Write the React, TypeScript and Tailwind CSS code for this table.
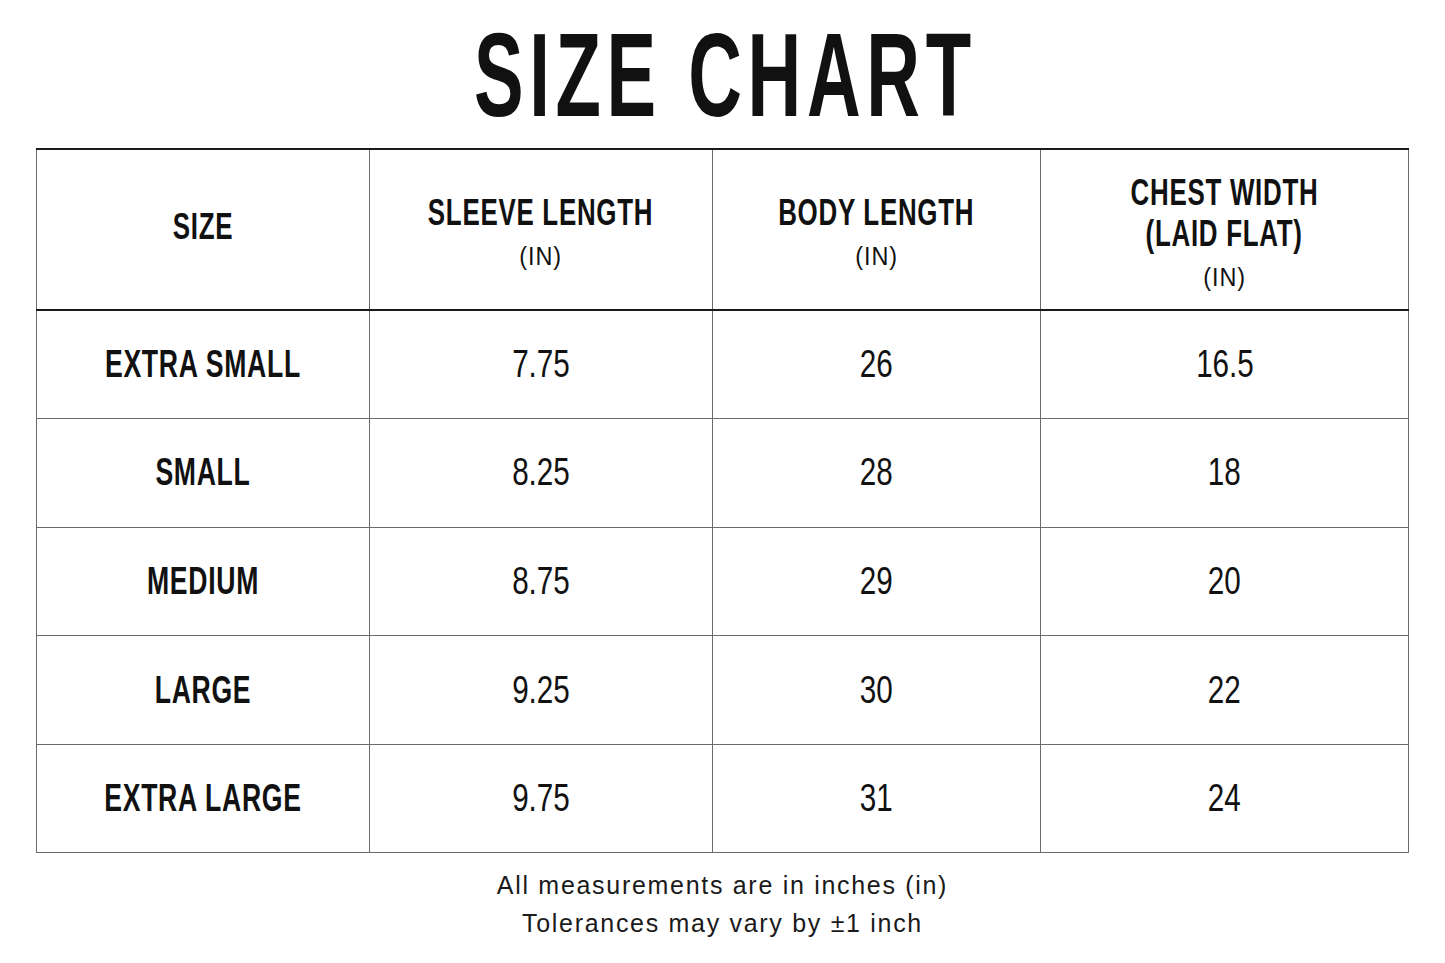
const columns = [
  { w: "w-[333px]", title: ["SIZE"], unit: false },
  { w: "w-[343px]", title: ["SLEEVE LENGTH"], unit: true },
  { w: "w-[328px]", title: ["BODY LENGTH"], unit: true },
  { w: "w-[368px]", title: ["CHEST WIDTH", "(LAID FLAT)"], unit: true },
];

const rows = [
  ["EXTRA SMALL", "7.75", "26", "16.5"],
  ["SMALL", "8.25", "28", "18"],
  ["MEDIUM", "8.75", "29", "20"],
  ["LARGE", "9.25", "30", "22"],
  ["EXTRA LARGE", "9.75", "31", "24"],
];

const display = "font-['Liberation_Sans',Arial,sans-serif]";

export default function App() {
  return (
    <div className="w-[1445px] h-[963px] bg-white text-[#111] flex flex-col items-center">
      <h1
        className={`${display} mt-[16px] text-[118px] leading-none font-bold tracking-[9px] pl-[9px] scale-x-[0.63]`}
      >
        SIZE CHART
      </h1>

      <table className="mt-[14px] border-collapse border-t-2 border-t-[#1a1a1a] table-fixed">
        <thead>
          <tr className="h-[161px] border-b-2 border-b-[#1a1a1a]">
            {columns.map((c, i) => (
              <th
                key={i}
                className={`${c.w} border-x border-[#6b6b6b] p-0 align-middle`}
              >
                <div className={`flex flex-col items-center ${c.unit ? "pt-[4px]" : "pb-[7px]"}`}>
                  {c.title.map((t) => (
                    <span
                      key={t}
                      className={`${display} text-[36px] leading-[41px] font-bold tracking-[1px] scale-x-[0.72]`}
                    >
                      {t}
                    </span>
                  ))}
                  {c.unit && (
                    <span
                      className={`${display} mt-[8px] text-[26px] leading-[30px] font-normal tracking-[1px] scale-x-[0.9]`}
                    >
                      (IN)
                    </span>
                  )}
                </div>
              </th>
            ))}
          </tr>
        </thead>
        <tbody>
          {rows.map((r, ri) => (
            <tr key={ri} className="h-[108.6px] border-b border-[#6b6b6b]">
              {r.map((v, ci) => (
                <td
                  key={ci}
                  className="border-x border-[#6b6b6b] p-0 text-center align-middle"
                >
                  <span
                    className={
                      ci === 0
                        ? `${display} inline-block text-[38px] font-bold tracking-[1px] scale-x-[0.7]`
                        : `${display} inline-block text-[38px] font-normal scale-x-[0.78]`
                    }
                  >
                    {v}
                  </span>
                </td>
              ))}
            </tr>
          ))}
        </tbody>
      </table>

      <div className="mt-[13px] flex flex-col items-center font-['Liberation_Sans',Arial,sans-serif] text-[25px] leading-[38px] tracking-[1.7px] text-[#1a1a1a]">
        <p>All measurements are in inches (in)</p>
        <p>Tolerances may vary by ±1 inch</p>
      </div>
    </div>
  );
}
